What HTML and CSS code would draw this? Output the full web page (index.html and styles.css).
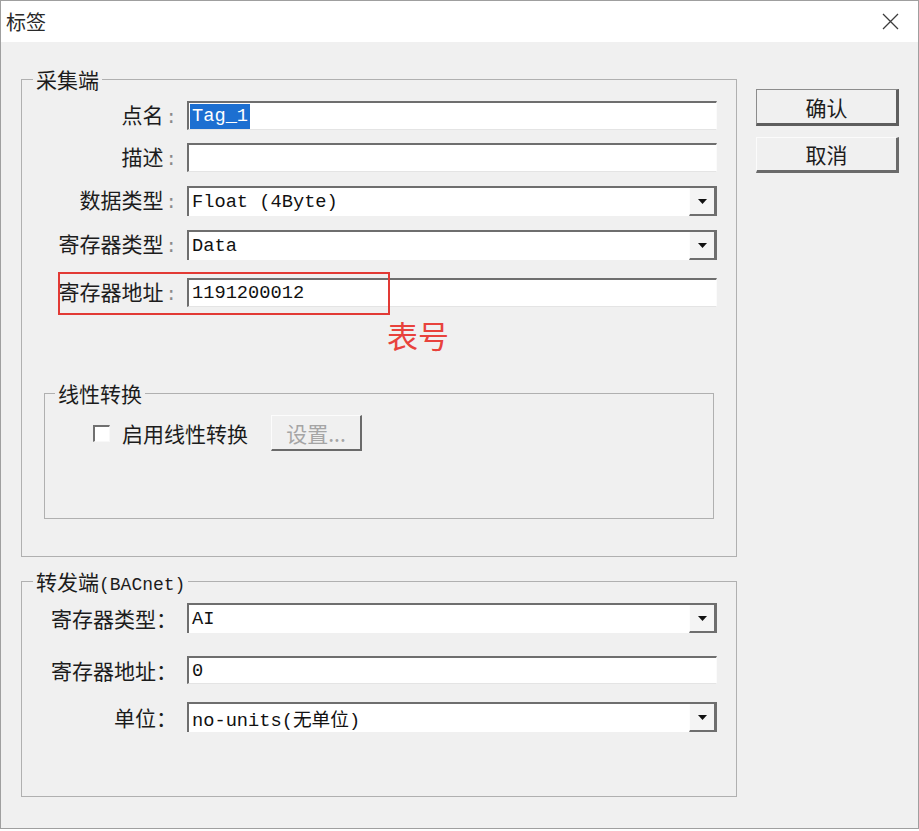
FILE: index.html
```html
<!DOCTYPE html>
<html lang="zh-CN">
<head>
<meta charset="utf-8">
<title>标签</title>
<link rel="stylesheet" href="styles.css">
</head>
<body>
<div class="window">
  <div class="titlebar">
    <span class="title">标签</span>
    <span class="close"><svg width="17" height="17" viewBox="0 0 17 17"><path d="M1 1L16 16M16 1L1 16" stroke="#3c3c3c" stroke-width="1.3" fill="none"/></svg></span>
  </div>
  <div class="content">
    <div class="main">
      <fieldset class="group g1">
        <legend>采集端</legend>
        <div class="row">
          <label class="lbl">点名<span class="colon">:</span></label>
          <div class="field text"><span class="sel">Tag_1</span></div>
        </div>
        <div class="row mt13">
          <label class="lbl">描述<span class="colon">:</span></label>
          <div class="field text"></div>
        </div>
        <div class="row mt14">
          <label class="lbl">数据类型<span class="colon">:</span></label>
          <div class="field combo"><span class="value">Float (4Byte)</span><span class="drop"><svg width="9" height="5" viewBox="0 0 9 5"><path d="M0 0H9L4.5 5Z" fill="#111"/></svg></span></div>
        </div>
        <div class="row mt14">
          <label class="lbl">寄存器类型<span class="colon">:</span></label>
          <div class="field combo"><span class="value">Data</span><span class="drop"><svg width="9" height="5" viewBox="0 0 9 5"><path d="M0 0H9L4.5 5Z" fill="#111"/></svg></span></div>
        </div>
        <div class="row mt18">
          <label class="lbl">寄存器地址<span class="colon">:</span></label>
          <div class="field text">1191200012</div>
          <span class="mark"></span>
          <span class="mark-text">表号</span>
        </div>
        <fieldset class="group sub">
          <legend>线性转换</legend>
          <div class="cbrow">
            <span class="checkbox"></span>
            <span class="cblabel">启用线性转换</span>
            <span class="btn btn-set">设置...</span>
          </div>
        </fieldset>
      </fieldset>
      <fieldset class="group g2">
        <legend>转发端<span class="latin">(BACnet)</span></legend>
        <div class="row">
          <label class="lbl">寄存器类型：</label>
          <div class="field combo"><span class="value">AI</span><span class="drop"><svg width="9" height="5" viewBox="0 0 9 5"><path d="M0 0H9L4.5 5Z" fill="#111"/></svg></span></div>
        </div>
        <div class="row mt23">
          <label class="lbl">寄存器地址：</label>
          <div class="field text short">0</div>
        </div>
        <div class="row mt18">
          <label class="lbl">单位：</label>
          <div class="field combo"><span class="value">no-units(无单位)</span><span class="drop"><svg width="9" height="5" viewBox="0 0 9 5"><path d="M0 0H9L4.5 5Z" fill="#111"/></svg></span></div>
        </div>
      </fieldset>
    </div>
    <div class="side">
      <span class="btn btn-ok">确认</span>
      <span class="btn btn-cancel">取消</span>
    </div>
  </div>
</div>
</body>
</html>
```

FILE: styles.css
```css
body {
  margin: 0;
  background: #ffffff;
}

.window {
  width: 919px;
  height: 829px;
  box-sizing: border-box;
  border: 1px solid #9f9f9f;
  background: #f0f0f0;
  display: flex;
  flex-direction: column;
  font-family: "Noto Sans CJK SC", sans-serif;
  color: #1c1c1c;
}

.titlebar {
  height: 41px;
  flex: none;
  background: #ffffff;
  display: flex;
  align-items: center;
  justify-content: space-between;
  padding: 0 19px 0 5px;
}

.title {
  font-size: 20px;
  line-height: 24px;
  color: #2a2a2a;
}

.close {
  display: flex;
  width: 17px;
  height: 17px;
}

.content {
  flex: 1;
  display: flex;
  align-items: flex-start;
  padding-left: 20px;
  gap: 19px;
}

.main {
  width: 716px;
  flex: none;
}

.group {
  margin: 0;
  padding: 11px 0 37px 0;
  border: 1px solid #b0b0b0;
  min-width: 0;
}

.group legend {
  margin-left: 11px;
  padding: 0 3px;
  height: 22px;
  font-size: 21px;
  line-height: 22px;
  color: #1c1c1c;
  white-space: nowrap;
}

.latin {
  font-family: "Liberation Mono", monospace;
  font-size: 18px;
  line-height: 18px;
}

.g1 {
  margin-top: 26px;
}

.g2 {
  margin-top: 13px;
  padding-bottom: 64px;
}

.row {
  display: flex;
  align-items: center;
  margin-right: 19px;
  position: relative;
}

.mt13 { margin-top: 13px; }
.mt14 { margin-top: 14px; }
.mt18 { margin-top: 18px; }
.mt23 { margin-top: 23px; }

.lbl {
  width: 155px;
  flex: none;
  text-align: right;
  font-size: 21px;
  line-height: 24px;
  white-space: nowrap;
}

.colon {
  font-family: "Liberation Mono", monospace;
  font-size: 19px;
  color: #8a8a8a;
  padding-left: 2px;
}

.field {
  margin-left: 10px;
  flex: 1;
  box-sizing: border-box;
  display: flex;
  align-items: center;
  background: #ffffff;
  font-family: "Liberation Mono", "Noto Sans CJK SC", monospace;
  font-size: 18.7px;
  color: #111111;
  white-space: pre;
}

.text {
  height: 29px;
  padding-left: 3px;
  border-style: solid;
  border-width: 2px 1px 1px 2px;
  border-color: #6e6e6e #fbfbfb #e4e4e4 #6e6e6e;
}

.text.short {
  height: 28px;
}

.sel {
  background: #1c6fd1;
  color: #ffffff;
  line-height: 25px;
  padding: 0 2px;
  margin-left: -2px;
}

.combo {
  height: 30px;
  padding-left: 3px;
  border-style: solid;
  border-width: 2px 0 0 2px;
  border-color: #6e6e6e;
}

.combo .value {
  flex: 1;
}

.drop {
  width: 28px;
  align-self: stretch;
  box-sizing: border-box;
  border-style: solid;
  border-width: 0 3px 2px 1px;
  border-color: #6e6e6e #6e6e6e #6e6e6e #fdfdfd;
  background: #f4f4f4;
  display: flex;
  align-items: center;
  justify-content: center;
  padding-top: 1px;
}

.mark {
  position: absolute;
  left: 36px;
  top: -6px;
  width: 332px;
  height: 43px;
  box-sizing: border-box;
  border: 2px solid #e23a35;
  pointer-events: none;
}

.mark-text {
  position: absolute;
  left: 365px;
  top: 41px;
  font-size: 31px;
  line-height: 31px;
  color: #e8423c;
}

.sub {
  margin: 75px 22px 0 22px;
  padding: 11px 0 67px 0;
}

.sub legend {
  margin-left: 10px;
}

.cbrow {
  display: flex;
  align-items: center;
  height: 36px;
}

.checkbox {
  width: 17px;
  height: 17px;
  margin-left: 48px;
  box-sizing: border-box;
  border-style: solid;
  border-width: 2px 1px 1px 2px;
  border-color: #707070 #f8f8f8 #f8f8f8 #707070;
  background: #ffffff;
}

.cblabel {
  margin-left: 12px;
  font-size: 21px;
  line-height: 24px;
}

.btn {
  box-sizing: border-box;
  display: flex;
  align-items: center;
  justify-content: center;
  background: #f0f0f0;
  border-style: solid;
  font-size: 21px;
  line-height: 24px;
  color: #1c1c1c;
}

.btn-set {
  margin-left: 23px;
  width: 91px;
  height: 36px;
  border-width: 1px 2px 2px 1px;
  border-color: #fcfcfc #6a6a6a #6a6a6a #fcfcfc;
  color: #a5a5a5;
}

.side {
  width: 143px;
  flex: none;
  padding-top: 47px;
  display: flex;
  flex-direction: column;
}

.btn-ok {
  height: 37px;
  border-width: 1px 3px 3px 1px;
  border-color: #8c8c8c #5e5e5e #5e5e5e #8c8c8c;
}

.btn-cancel {
  margin-top: 11px;
  height: 36px;
  border-width: 1px 3px 3px 1px;
  border-color: #fbfbfb #6a6a6a #6a6a6a #fbfbfb;
}
```
